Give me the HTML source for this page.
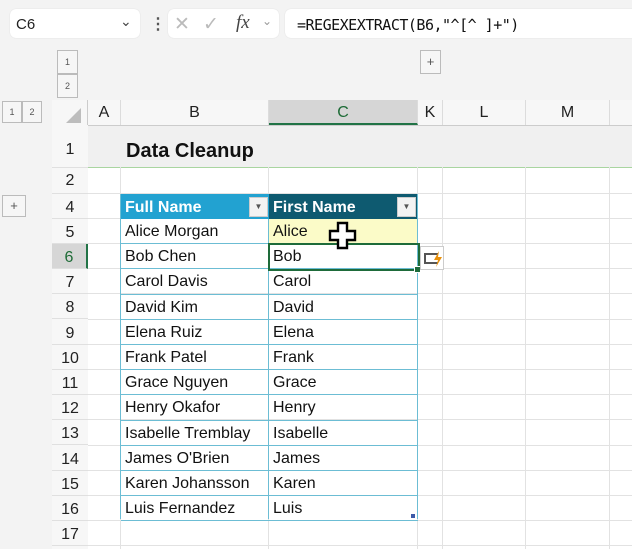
<!DOCTYPE html><html><head><style>
body{margin:0;width:632px;height:549px;overflow:hidden;background:#f3f3f3;font-family:"Liberation Sans",sans-serif;position:relative}
.a{position:absolute}
.box{background:#fff;border-radius:6px;box-shadow:0 0 1px #ccc}
.rh{position:absolute;left:52px;width:36px;text-align:center;font-size:16px;color:#222;background:#f7f7f7;border-bottom:1px solid #e0e0e0}
.ch{position:absolute;top:100px;height:25px;line-height:26px;text-align:center;font-size:16px;color:#222;background:#f7f7f7;border-right:1px solid #dcdcdc}
.cell{position:absolute;font-size:16px;color:#111;padding-left:4px;box-sizing:border-box;line-height:26px}
.gl{position:absolute;background:#e2e2e2}
.sb{position:absolute;border:1px solid #bbb;background:#f6f6f6;font-size:9px;color:#555;text-align:center;box-sizing:border-box}
</style></head><body>
<div class="a box" style="left:10px;top:9px;width:130px;height:29px"></div>
<div class="a" style="left:16px;top:16px;font-size:15px;color:#222">C6</div>
<div class="a" style="left:120px;top:13px;font-size:14px;color:#444">&#8964;</div>
<div class="a" style="left:150px;top:14px;font-size:16px;color:#555;font-weight:bold">&#8942;</div>
<div class="a box" style="left:168px;top:9px;width:111px;height:29px"></div>
<div class="a" style="left:174px;top:13px;font-size:19px;color:#bbb">&#10005;</div>
<div class="a" style="left:203px;top:13px;font-size:19px;color:#bbb">&#10003;</div>
<div class="a" style="left:236px;top:12px;font-size:19px;color:#444;font-style:italic;font-family:'Liberation Serif',serif">fx</div>
<div class="a" style="left:262px;top:14px;font-size:12px;color:#999">&#8964;</div>
<div class="a box" style="left:285px;top:9px;width:360px;height:29px"></div>
<div class="a" style="left:297px;top:16px;font-size:15px;color:#111;font-family:'DejaVu Sans Mono',monospace;letter-spacing:-0.5px">=REGEXEXTRACT(B6,"^[^ ]+")</div>
<div class="sb" style="left:57px;top:50px;width:21px;height:24px;line-height:22px">1</div>
<div class="sb" style="left:57px;top:74px;width:21px;height:24px;line-height:22px">2</div>
<div class="sb" style="left:420px;top:50px;width:21px;height:24px;line-height:22px;font-size:13px">+</div>
<div class="sb" style="left:2px;top:101px;width:20px;height:22px;line-height:20px">1</div>
<div class="sb" style="left:22px;top:101px;width:20px;height:22px;line-height:20px">2</div>
<div class="sb" style="left:2px;top:195px;width:24px;height:22px;line-height:20px;font-size:13px">+</div>
<div class="a" style="left:88px;top:125px;width:544px;height:424px;background:#fff"></div>
<div class="a" style="left:88px;top:125px;width:544px;height:42px;background:#f0f0f0;border-bottom:1px solid #a9d5a0"></div>
<div class="a" style="left:52px;top:100px;width:36px;height:25px;background:#f7f7f7"></div>
<div class="a" style="left:66px;top:108px;width:0;height:0;border-left:15px solid transparent;border-bottom:15px solid #bdbdbd"></div>
<div class="ch" style="left:88px;width:32px">A</div>
<div class="ch" style="left:121px;width:147px">B</div>
<div class="ch" style="left:269px;width:148px;background:#d6d6d6;color:#1d6b36;border-bottom:2px solid #217346;height:23px">C</div>
<div class="ch" style="left:418px;width:24px">K</div>
<div class="ch" style="left:443px;width:82px">L</div>
<div class="ch" style="left:526px;width:83px">M</div>
<div class="ch" style="left:610px;width:22px;border:0"></div>
<div class="a" style="left:88px;top:125px;width:544px;height:1px;background:#ccc"></div>
<div class="gl" style="left:120px;top:167px;width:1px;height:382px"></div>
<div class="gl" style="left:268px;top:167px;width:1px;height:382px"></div>
<div class="gl" style="left:417px;top:167px;width:1px;height:382px"></div>
<div class="gl" style="left:442px;top:167px;width:1px;height:382px"></div>
<div class="gl" style="left:525px;top:167px;width:1px;height:382px"></div>
<div class="gl" style="left:609px;top:167px;width:1px;height:382px"></div>
<div class="a" style="left:87px;top:100px;width:1px;height:449px;background:#ccc"></div>
<div class="a" style="left:52px;top:125px;width:36px;height:424px;background:#f7f7f7"></div>
<div id="rows"></div>
<div class="rh" style="top:125px;height:42px;line-height:50px">1</div>
<div class="rh" style="top:168px;height:25px;line-height:26px">2</div>
<div class="cell" style="left:122px;top:130px;font-size:20px;font-weight:bold;line-height:42px">Data Cleanup</div>
<script>
var names=[["Alice Morgan","Alice"],["Bob Chen","Bob"],["Carol Davis","Carol"],["David Kim","David"],["Elena Ruiz","Elena"],["Frank Patel","Frank"],["Grace Nguyen","Grace"],["Henry Okafor","Henry"],["Isabelle Tremblay","Isabelle"],["James O'Brien","James"],["Karen Johansson","Karen"],["Luis Fernandez","Luis"]];
var h="";var top0=193.5,rh=25.2;
h+='<div class="gl" style="left:88px;top:193px;width:544px;height:1px"></div>';
for(var i=0;i<14;i++){var t=top0+i*rh;var n=i+4;
h+='<div class="rh" style="top:'+t+'px;height:'+(rh-1)+'px;line-height:'+(rh+2)+'px'+(n==6?';background:#d6d6d6;color:#1d6b36;border-right:2px solid #217346;width:34px':'')+'">'+n+'</div>';
h+='<div class="gl" style="left:88px;top:'+(t+rh-1)+'px;width:544px;height:1px"></div>';}
h+='<div class="a" style="left:121px;top:194px;width:148px;height:25px;background:#22a2d1"></div>';
h+='<div class="a" style="left:269px;top:194px;width:149px;height:25px;background:#0e5a70"></div>';
h+='<div class="cell" style="left:121px;top:194px;color:#fff;font-weight:bold;line-height:27px">Full Name</div>';
h+='<div class="cell" style="left:269px;top:194px;color:#fff;font-weight:bold;line-height:27px">First Name</div>';
h+='<div class="a" style="left:249px;top:197px;width:17px;height:18px;background:#f3f3f3;border:1px solid #ccc;font-size:8px;text-align:center;line-height:18px;color:#555">&#9660;</div>';
h+='<div class="a" style="left:397px;top:197px;width:17px;height:18px;background:#f3f3f3;border:1px solid #ccc;font-size:8px;text-align:center;line-height:18px;color:#555">&#9660;</div>';
h+='<div class="a" style="left:269px;top:219px;width:149px;height:25px;background:#fbfbc8"></div>';
for(var i=0;i<12;i++){var t=219+i*rh;
h+='<div class="a" style="left:121px;top:'+(t+rh-1)+'px;width:297px;height:1px;background:#6cbdd4"></div>';
h+='<div class="cell" style="left:121px;top:'+t+'px">'+names[i][0]+'</div><div class="cell" style="left:269px;top:'+t+'px">'+names[i][1]+'</div>';}
h+='<div class="a" style="left:120px;top:194px;width:1px;height:325px;background:#6cbdd4"></div>';
h+='<div class="a" style="left:268px;top:219px;width:1px;height:300px;background:#6cbdd4"></div>';
h+='<div class="a" style="left:417px;top:194px;width:1px;height:325px;background:#6cbdd4"></div>';
h+='<div class="a" style="left:268px;top:243px;width:148px;height:24px;border:2px solid #1e6b3a;box-sizing:content-box"></div>';
h+='<div class="a" style="left:414px;top:266px;width:5px;height:5px;background:#1e6b3a;border:1px solid #fff"></div>';
h+='<div class="a" style="left:411px;top:514px;width:4px;height:4px;background:#3d5aa8"></div>';
document.getElementById("rows").innerHTML=h;
</script>
<div class="a" style="left:420px;top:246px;width:24px;height:24px;background:#fff;border:1px solid #ccc;box-sizing:border-box"></div>
<div class="a" style="left:424px;top:253px;width:12px;height:7px;border:2px solid #555;border-right:0"></div>
<svg class="a" style="left:433px;top:251px" width="10" height="16" viewBox="0 0 10 16"><path d="M6 0L1 9h4l-2 7 6-10H5z" fill="#e8900c"/></svg>
<svg class="a" style="left:328px;top:221px" width="30" height="30" viewBox="0 0 30 30"><path d="M10 2h9v8h8v9h-8v8h-9v-8H2v-9h8z" fill="#fff" stroke="#000" stroke-width="2.4"/></svg>
</body></html>
